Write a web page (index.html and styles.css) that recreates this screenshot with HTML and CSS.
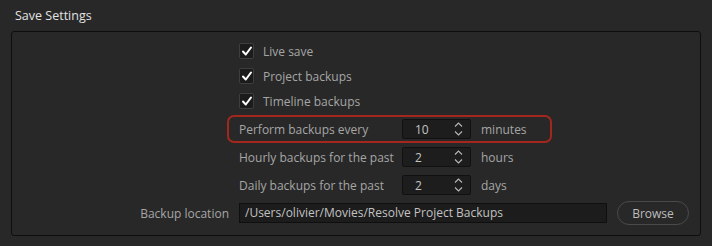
FILE: index.html
```html
<!DOCTYPE html>
<html lang="en">
<head>
    <meta charset="UTF-8">
    <title>Save Settings</title>
    <link rel="stylesheet" href="styles.css">
</head>
<body>
    <div class="section">
        <div class="section-title">Save Settings</div>

        <div class="panel">
            <div class="checks">
                <label class="check-row">
                    <span class="checkbox">
                        <svg width="12" height="12" viewBox="0 0 12 12"><path d="M2 6.5 L4.8 9.5 L10 2.5" fill="none" stroke="#fff" stroke-width="2" stroke-linecap="round" stroke-linejoin="round"/></svg>
                    </span>
                    Live save
                </label>
                <label class="check-row">
                    <span class="checkbox">
                        <svg width="12" height="12" viewBox="0 0 12 12"><path d="M2 6.5 L4.8 9.5 L10 2.5" fill="none" stroke="#fff" stroke-width="2" stroke-linecap="round" stroke-linejoin="round"/></svg>
                    </span>
                    Project backups
                </label>
                <label class="check-row">
                    <span class="checkbox">
                        <svg width="12" height="12" viewBox="0 0 12 12"><path d="M2 6.5 L4.8 9.5 L10 2.5" fill="none" stroke="#fff" stroke-width="2" stroke-linecap="round" stroke-linejoin="round"/></svg>
                    </span>
                    Timeline backups
                </label>
            </div>

            <div class="spin-rows">
                <div class="spin-row highlight">
                    <span class="spin-label">Perform backups every</span>
                    <div class="spinner">
                        <span class="spin-value">10</span>
                        <svg class="arrows" width="9" height="16" viewBox="0 0 9 16"><path d="M1 5.5 L4.5 2 L8 5.5 M1 10.5 L4.5 14 L8 10.5" fill="none" stroke="#b8b8b8" stroke-width="1.1"/></svg>
                    </div>
                    <span class="unit">minutes</span>
                </div>
                <div class="spin-row">
                    <span class="spin-label">Hourly backups for the past</span>
                    <div class="spinner">
                        <span class="spin-value">2</span>
                        <svg class="arrows" width="9" height="16" viewBox="0 0 9 16"><path d="M1 5.5 L4.5 2 L8 5.5 M1 10.5 L4.5 14 L8 10.5" fill="none" stroke="#b8b8b8" stroke-width="1.1"/></svg>
                    </div>
                    <span class="unit">hours</span>
                </div>
                <div class="spin-row">
                    <span class="spin-label">Daily backups for the past</span>
                    <div class="spinner">
                        <span class="spin-value">2</span>
                        <svg class="arrows" width="9" height="16" viewBox="0 0 9 16"><path d="M1 5.5 L4.5 2 L8 5.5 M1 10.5 L4.5 14 L8 10.5" fill="none" stroke="#b8b8b8" stroke-width="1.1"/></svg>
                    </div>
                    <span class="unit">days</span>
                </div>
            </div>

            <div class="location-row">
                <span class="location-label">Backup location</span>
                <div class="path-field">/Users/olivier/Movies/Resolve Project Backups</div>
                <button class="btn-browse">Browse</button>
            </div>
        </div>
    </div>
</body>
</html>
```

FILE: styles.css
```css
* {
    margin: 0;
    padding: 0;
    box-sizing: border-box;
}

body {
    font-family: 'Open Sans', 'Noto Sans', sans-serif;
    font-size: 12px;
    background: #282828;
    color: #a6a6a6;
    width: 712px;
    height: 246px;
    overflow: hidden;
}

.section {
    padding: 0 11px;
}

.section-title {
    height: 31px;
    line-height: 31px;
    padding-left: 4px;
    color: #e2e2e2;
    font-size: 12.5px;
}

.panel {
    width: 690px;
    height: 205px;
    border: 1px solid #0e0e0e;
    border-radius: 3px;
    padding: 11px 0 0 227px;
}

.checks {
    display: flex;
    flex-direction: column;
    gap: 9px;
}

.check-row {
    display: flex;
    align-items: center;
    gap: 9px;
    height: 16px;
}

.checkbox {
    width: 15px;
    height: 16px;
    background: #1b1b1b;
    border: 1px solid #3e3e3e;
    border-radius: 2px;
    display: flex;
    align-items: center;
    justify-content: center;
}

.spin-rows {
    margin-top: 6px;
    margin-left: -12px;
    display: flex;
    flex-direction: column;
}

.spin-row {
    display: flex;
    align-items: center;
    width: 325px;
    height: 28px;
    padding-left: 10px;
    border: 2px solid transparent;
    border-radius: 7px;
}

.spin-row.highlight {
    border-color: #a3271d;
}

.spin-label {
    width: 163px;
}

.spinner {
    width: 69px;
    height: 20px;
    background: #1d1d1d;
    border: 1px solid #111;
    border-radius: 2px;
    display: flex;
    align-items: center;
    justify-content: space-between;
    padding: 0 7px 0 12px;
    color: #c4c4c4;
}

.arrows {
    display: block;
}

.unit {
    margin-left: 10px;
}

.location-row {
    display: flex;
    align-items: center;
    height: 24px;
    margin-top: 2px;
    margin-left: -227px;
}

.location-label {
    width: 217px;
    text-align: right;
}

.path-field {
    width: 368px;
    height: 20px;
    margin-left: 10px;
    background: #1c1c1c;
    border: 1px solid #0f0f0f;
    padding-left: 5px;
    line-height: 18px;
    color: #c2c2c2;
}

.btn-browse {
    margin-left: 10px;
    width: 72px;
    height: 24px;
    border-radius: 12px;
    border: 1px solid #4a4a4a;
    background: transparent;
    color: #bdbdbd;
    font-family: inherit;
    font-size: 12px;
}
```
